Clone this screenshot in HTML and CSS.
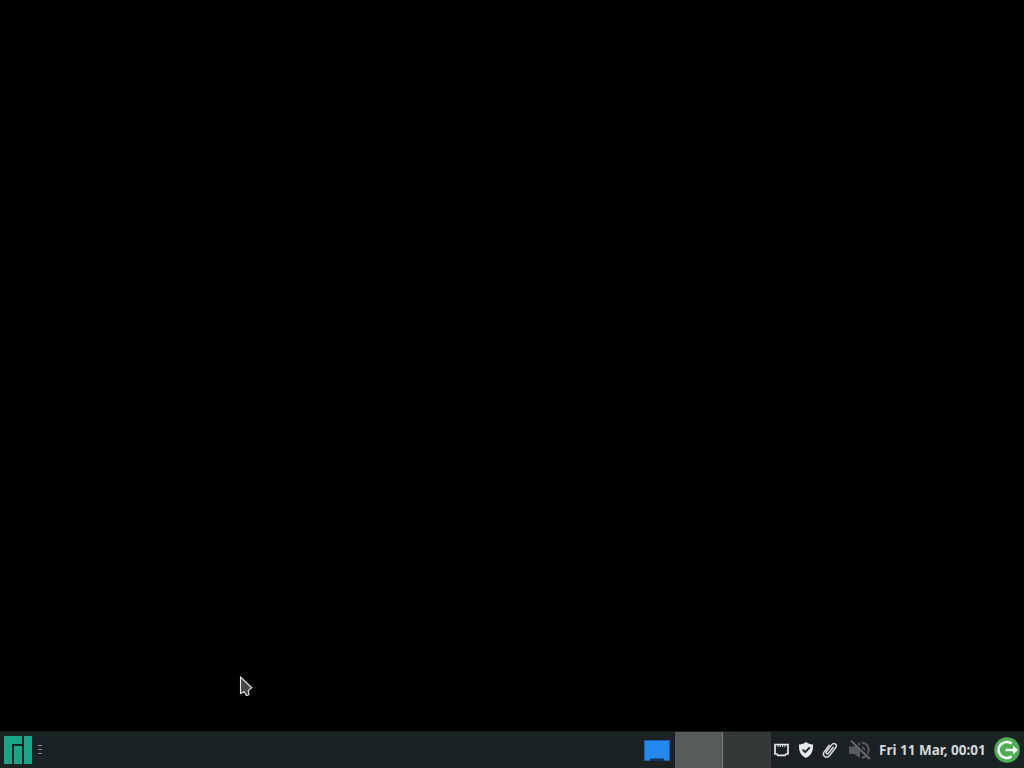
FILE: index.html
```
<!DOCTYPE html>
<html lang="en">
<head>
    <meta charset="UTF-8">
    <meta name="viewport" content="width=device-width, initial-scale=1.0">
    <title>Desktop</title>
    <link rel="stylesheet" href="styles.css">
</head>
<body>
    <main class="desktop">
        <svg class="cursor" width="14" height="22" viewBox="0 0 14 22">
            <path d="M1.5 1 V17.5 L5 15.8 L7.5 19.5 L10 18.7 L9.3 14.5 L12.8 11.8 Z" fill="#484848" stroke="#e6e6e6" stroke-width="1.1"/>
        </svg>
    </main>

    <footer class="panel">
        <svg class="menu-logo" width="28" height="28" viewBox="0 0 28 28" fill="#1aa586">
            <path d="M0 0 H18 V8 H8 V28 H0 Z"/>
            <path d="M10 10 H18 V28 H10 Z"/>
            <path d="M20 0 H28 V28 H20 Z"/>
        </svg>
        <div class="handle">
            <span></span>
            <span></span>
            <span></span>
        </div>

        <svg class="show-desktop" width="26" height="22" viewBox="0 0 26 22">
            <path d="M0 0 H26 V21 H0 Z" fill="#1c5fae"/>
            <path d="M1 1 H25 V20 H1 Z" fill="#2389ef"/>
            <path d="M6 18.5 H20 V21 H6 Z" fill="#15365c"/>
        </svg>

        <div class="workspaces">
            <div class="workspace active"></div>
            <div class="workspace"></div>
        </div>

        <div class="tray">
            <svg class="network" width="16" height="14" viewBox="0 0 16 14">
                <path d="M1 1.5 H14 V11 H12 L11 12.4 H4 L3 11 H1 Z" fill="none" stroke="#e6eaea" stroke-width="1.7"/>
                <path d="M4 1 V4 M6.3 1 V4 M8.7 1 V4 M11 1 V4" stroke="#e6eaea" stroke-width="1"/>
            </svg>
            <svg class="shield" width="14" height="16" viewBox="0 0 14 16">
                <path d="M7 0 C9 1.7 11 2.3 14 2.5 C14.2 9 12.5 13.2 7 16 C1.5 13.2 -0.2 9 0 2.5 C3 2.3 5 1.7 7 0 Z" fill="#e6eaea"/>
                <path d="M3.7 7.7 L6.2 10.2 L10.8 5.4" fill="none" stroke="#1d2426" stroke-width="1.8"/>
            </svg>
            <svg class="clip" width="16" height="18" viewBox="0 0 16 18">
                <path d="M11.2 6.2 L6.5 12.2 C5.2 13.8 3.2 12.5 4.4 10.8 L9.6 3.9 C12 .8 15.8 3.4 13.6 6.7 L7.6 14.5 C4.4 18.2 -0.4 14.8 2.2 10.9 L7.2 4.3" fill="none" stroke="#d9dddd" stroke-width="1.5" stroke-linecap="round"/>
            </svg>
            <svg class="volume" width="22" height="20" viewBox="0 0 22 20">
                <path d="M0 6.5 H5 L11 2 V18 L5 14 H0 Z" fill="#565c5d"/>
                <path d="M13 7 C15.7 8 15.7 12 13 13.2 M13 2.5 C21.8 3.5 21.8 16.5 13 17.6" fill="none" stroke="#565c5d" stroke-width="2.2"/>
                <path d="M3.5 0 L22 18" stroke="#1b2224" stroke-width="1.6"/>
                <path d="M2 .8 L20.8 19" stroke="#646a6b" stroke-width="2"/>
            </svg>
        </div>

        <div class="clock">Fri 11 Mar, 00:01</div>

        <svg class="logout" width="26" height="26" viewBox="0 0 26 26">
            <circle cx="13" cy="13" r="12.8" fill="#4fae55"/>
            <path d="M17.6 6.6 A8.1 8.1 0 1 0 17.6 19.4" fill="none" stroke="#f4faf4" stroke-width="2.6"/>
            <path d="M11.5 11.7 H19 V8.6 L24 13 L19 17.4 V14.3 H11.5 Z" fill="#f4faf4"/>
        </svg>
    </footer>
</body>
</html>
```
FILE: styles.css
```
body {
    margin: 0;
    height: 768px;
    display: flex;
    flex-direction: column;
    overflow: hidden;
    background: #000;
    font-family: "Noto Sans", sans-serif;
}

.desktop {
    position: relative;
    flex: 1;
    background: #000;
}

.cursor {
    position: absolute;
    left: 239px;
    top: 676px;
}

.panel {
    display: flex;
    align-items: center;
    box-sizing: border-box;
    height: 37px;
    padding: 0 4.5px 0 4px;
    border-top: 1px solid #161c1d;
    background: #1b2224;
}

.panel svg {
    display: block;
    flex: none;
}

.handle {
    display: flex;
    flex-direction: column;
    gap: 3px;
    margin: 0 0 2px 6px;
}

.handle span {
    width: 4px;
    height: 1px;
    background: #899091;
}

.show-desktop {
    margin: 2px 5px 0 auto;
}

.workspaces {
    display: flex;
    align-self: stretch;
}

.workspace {
    box-sizing: border-box;
    width: 48px;
    background: #333839;
}

.workspace.active {
    border-right: 1px solid #7b8080;
    background: #565b5c;
}

.tray {
    display: flex;
    align-items: center;
    margin-left: 3px;
}

.shield {
    margin-left: 9px;
}

.clip {
    margin-left: 9px;
}

.volume {
    margin-left: 11px;
}

.clock {
    width: 107px;
    margin: 0 7.5px 0 8px;
    color: #d4d8d8;
    font-size: 13.5px;
    font-weight: bold;
    line-height: 20px;
    white-space: nowrap;
}
```
